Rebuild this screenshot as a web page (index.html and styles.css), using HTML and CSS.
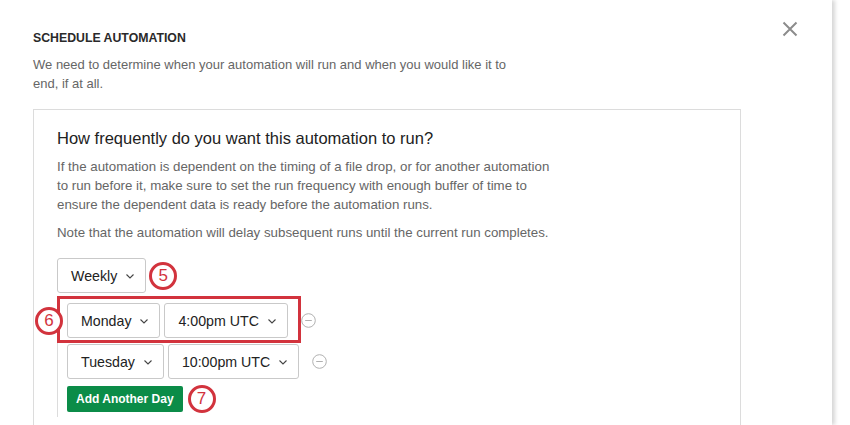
FILE: index.html
```html
<!doctype html>
<html lang="en">
  <head>
    <meta charset="utf-8">
    <title>Schedule Automation</title>
    <link rel="stylesheet" href="styles.css">
  </head>
  <body>
    <div class="modal">
      <button class="close" aria-label="Close">
        <svg width="16" height="16" viewBox="0 0 16 16"><path d="M1.5 1.5 L14.5 14.5 M14.5 1.5 L1.5 14.5" stroke="#8c8c8c" stroke-width="2" fill="none"/></svg>
      </button>

      <h1 class="title">SCHEDULE AUTOMATION</h1>
      <p class="intro">We need to determine when your automation will run and when you would like it to end, if at all.</p>

      <div class="panel">
        <h2>How frequently do you want this automation to run?</h2>
        <p>If the automation is dependent on the timing of a file drop, or for another automation to run before it, make sure to set the run frequency with enough buffer of time to ensure the dependent data is ready before the automation runs.</p>
        <p>Note that the automation will delay subsequent runs until the current run completes.</p>

        <div class="row">
          <div class="select">Weekly <svg class="chev" width="8" height="5" viewBox="0 0 8 5"><path d="M0.5 0.5 L4 4 L7.5 0.5" stroke="#444" stroke-width="1.1" fill="none"/></svg></div>
          <span class="marker marker-after">5</span>
        </div>

        <div class="days">
          <div class="row day">
            <div class="pair">
              <span class="highlight"></span>
              <span class="marker marker-left">6</span>
              <div class="select">Monday <svg class="chev" width="8" height="5" viewBox="0 0 8 5"><path d="M0.5 0.5 L4 4 L7.5 0.5" stroke="#444" stroke-width="1.1" fill="none"/></svg></div>
              <div class="select">4:00pm UTC <svg class="chev" width="8" height="5" viewBox="0 0 8 5"><path d="M0.5 0.5 L4 4 L7.5 0.5" stroke="#444" stroke-width="1.1" fill="none"/></svg></div>
            </div>
            <svg class="remove" width="15" height="15" viewBox="0 0 15 15"><circle cx="7.5" cy="7.5" r="6.8" stroke="#b0b0b0" fill="none"/><path d="M4.2 7.5 H10.8" stroke="#b0b0b0"/></svg>
          </div>

          <div class="row day">
            <div class="pair">
              <div class="select">Tuesday <svg class="chev" width="8" height="5" viewBox="0 0 8 5"><path d="M0.5 0.5 L4 4 L7.5 0.5" stroke="#444" stroke-width="1.1" fill="none"/></svg></div>
              <div class="select">10:00pm UTC <svg class="chev" width="8" height="5" viewBox="0 0 8 5"><path d="M0.5 0.5 L4 4 L7.5 0.5" stroke="#444" stroke-width="1.1" fill="none"/></svg></div>
            </div>
            <svg class="remove" width="15" height="15" viewBox="0 0 15 15"><circle cx="7.5" cy="7.5" r="6.8" stroke="#b0b0b0" fill="none"/><path d="M4.2 7.5 H10.8" stroke="#b0b0b0"/></svg>
          </div>

          <div class="row">
            <button class="add">Add Another Day</button>
            <span class="marker marker-after">7</span>
          </div>
        </div>
      </div>
    </div>
  </body>
</html>
```

FILE: styles.css
```css
html {
    font-family: "Liberation Sans", Arial, sans-serif;
    color: #222;
    background: #fff;
}

body { margin: 0; overflow: hidden; }

.modal {
    position: relative;
    width: 832px;
    height: 425px;
    padding: 30px 0 0 33px;
    box-sizing: border-box;
    overflow: hidden;
    box-shadow: 3px 0 4px rgba(0, 0, 0, 0.16);
}

.close {
    position: absolute;
    top: 21px;
    right: 34px;
    padding: 0;
    border: 0;
    background: none;
}

.title {
    margin: 0;
    font-size: 12.3px;
    font-weight: bold;
    line-height: 16px;
    color: #2a2a2a;
}

.intro {
    margin: 9px 0 0;
    width: 490px;
    font-size: 13px;
    line-height: 19px;
    color: #666;
}

.panel {
    margin-top: 16px;
    width: 683px;
    height: 330px;
    padding: 17px 0 0 23px;
    border: 1px solid #dcdcdc;
    border-bottom: 0;
}

.panel h2 {
    margin: 0;
    font-size: 16.5px;
    font-weight: normal;
    line-height: 22px;
    color: #222;
}

.panel p {
    margin: 8px 0 0;
    width: 500px;
    font-size: 13.3px;
    line-height: 19px;
    color: #666;
}

.panel p + p { margin-top: 9px; }

.panel > .row { margin-top: 16px; }

.row {
    display: flex;
    align-items: center;
}

.select {
    display: flex;
    align-items: center;
    gap: 9px;
    height: 33px;
    padding: 0 11px 0 13px;
    border: 1px solid #c9c9c9;
    border-radius: 3px;
    font-size: 14.2px;
    color: #222;
    background: #fff;
}

.chev { margin-top: 1px; }

.days {
    margin-top: 3px;
    padding: 7px 0 4px 9px;
    border-left: 1px solid #dcdcdc;
}

.day + .day { margin-top: 6px; }

.pair {
    position: relative;
    display: flex;
    gap: 4px;
}

.highlight {
    position: absolute;
    top: -7px;
    left: -10px;
    right: -13px;
    bottom: -5px;
    border: 3px solid #d2333d;
}

.remove { margin-left: 13px; }

.add {
    margin-top: 6px;
    height: 26px;
    padding: 0 9px;
    border: 0;
    border-radius: 2px;
    font-family: inherit;
    font-size: 12px;
    font-weight: bold;
    color: #fff;
    background: #0b8c48;
}

.marker {
    display: flex;
    align-items: center;
    justify-content: center;
    width: 22px;
    height: 22px;
    border: 3px solid #d2333d;
    border-radius: 50%;
    font-size: 17px;
    color: #d2333d;
    background: #fff;
}

.marker-after { margin-left: 3px; }

.add + .marker-after { margin-left: 5px; margin-top: 6px; }

.marker-left {
    position: absolute;
    top: 4px;
    left: -32px;
}
```
